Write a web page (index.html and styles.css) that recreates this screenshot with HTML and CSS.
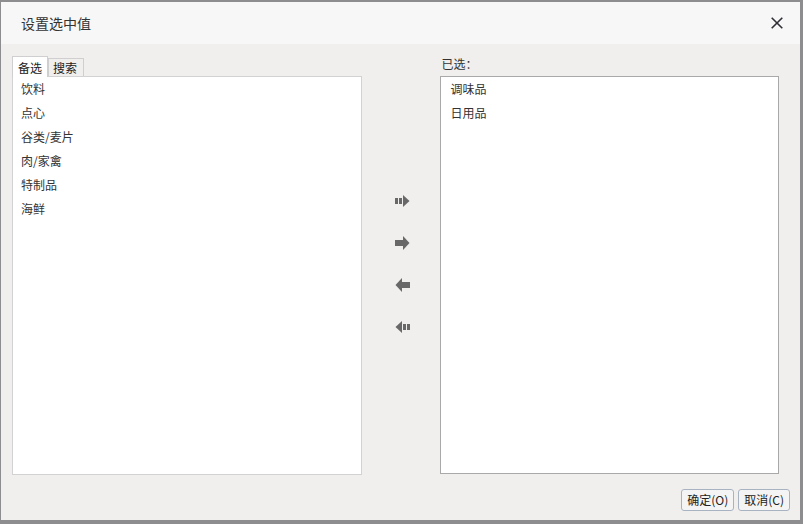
FILE: index.html
```html
<!DOCTYPE html>
<html lang="zh-CN">
<head>
<meta charset="utf-8">
<title>设置选中值</title>
<link rel="stylesheet" href="styles.css">
</head>
<body>
<div class="dialog">
  <div class="header">
    <span class="title">设置选中值</span>
    <span class="close" aria-label="关闭">
      <svg width="12" height="12" viewBox="0 0 12 12"><path d="M0.7 0.7 L11.3 11.3 M11.3 0.7 L0.7 11.3" stroke="#2f2f36" stroke-width="1.6" fill="none"/></svg>
    </span>
  </div>
  <div class="content">
    <div class="panel left">
      <div class="tabs">
        <div class="tab active">备选</div>
        <div class="tab">搜索</div>
      </div>
      <ul class="list list-left">
        <li>饮料</li>
        <li>点心</li>
        <li>谷类/麦片</li>
        <li>肉/家禽</li>
        <li>特制品</li>
        <li>海鲜</li>
      </ul>
    </div>
    <div class="mover">
      <span class="mbtn" title="全部右移">
        <svg width="15" height="13" viewBox="0 0 15 13"><rect x="0" y="3" width="3" height="6" fill="#686868"/><rect x="4" y="3" width="3" height="6" fill="#686868"/><polygon points="8,0 14.5,6 8,12" fill="#686868"/></svg>
      </span>
      <span class="mbtn" title="右移">
        <svg width="15" height="15" viewBox="0 0 15 15"><rect x="0" y="4" width="8" height="6" fill="#686868"/><polygon points="8,0 14.5,7 8,14" fill="#686868"/></svg>
      </span>
      <span class="mbtn" title="左移">
        <svg width="15" height="15" viewBox="0 0 15 15"><polygon points="7,0 0.5,7 7,14" fill="#686868"/><rect x="7" y="4" width="8" height="6" fill="#686868"/></svg>
      </span>
      <span class="mbtn" title="全部左移">
        <svg width="15" height="13" viewBox="0 0 15 13"><polygon points="7,0 0.5,6 7,12" fill="#686868"/><rect x="8" y="3" width="3" height="6" fill="#686868"/><rect x="12" y="3" width="3" height="6" fill="#686868"/></svg>
      </span>
    </div>
    <div class="panel right">
      <div class="label">已选：</div>
      <ul class="list list-right">
        <li>调味品</li>
        <li>日用品</li>
      </ul>
    </div>
  </div>
  <div class="footer">
    <button class="btn">确定(O)</button>
    <button class="btn">取消(C)</button>
  </div>
</div>
</body>
</html>
```
FILE: styles.css
```css
html, body {
  margin: 0;
  padding: 0;
}
body {
  background: #8d8d8f;
  width: 803px;
  height: 524px;
  overflow: hidden;
  font-family: "Noto Sans CJK SC", "Microsoft YaHei", "Liberation Sans", sans-serif;
  color: #333;
}
.dialog {
  margin: 2px 0 0 1px;
  width: 799px;
  height: 518px;
  background: #f0efee;
  display: flex;
  flex-direction: column;
  box-sizing: border-box;
}
.header {
  height: 42px;
  background: #f7f7f7;
  display: flex;
  align-items: center;
  justify-content: space-between;
  padding: 0 17px 0 20px;
  flex: none;
}
.title {
  font-size: 14px;
  color: #333;
  line-height: 20px;
}
.close {
  display: flex;
  width: 12px;
  height: 12px;
}
.content {
  display: flex;
  padding: 12px 21px 0 11px;
  height: 419px;
  flex: none;
}
.panel {
  display: flex;
  flex-direction: column;
}
.panel.left {
  width: 350px;
}
.panel.right {
  width: 339px;
}
.tabs {
  display: flex;
  align-items: flex-end;
  height: 20px;
  flex: none;
  position: relative;
  z-index: 1;
}
.tab {
  box-sizing: border-box;
  width: 36px;
  height: 18px;
  border: 1px solid #cfcfcf;
  border-bottom: none;
  background: #f0efee;
  font-size: 12px;
  line-height: 17px;
  padding-left: 4px;
  color: #222;
}
.tab.active {
  height: 21px;
  margin-bottom: -1px;
  background: #fff;
  line-height: 22px;
  padding-left: 5px;
}
.list {
  list-style: none;
  margin: 0;
  padding: 0;
  background: #fff;
  border: 1px solid #d2d2d2;
  flex: 1;
  box-sizing: border-box;
}
.list-right {
  border-color: #a9a9a9;
  flex: none;
  height: 398px;
}
.list li {
  font-size: 12px;
  line-height: 24px;
  height: 24px;
  color: #333;
}
.list-left li {
  padding-left: 8px;
}
.list-right li {
  padding-left: 9px;
}
.label {
  height: 20px;
  font-size: 12px;
  line-height: 16px;
  padding-left: 1px;
  color: #333;
  flex: none;
}
.mover {
  width: 79px;
  display: flex;
  flex-direction: column;
  align-items: center;
  justify-content: center;
  gap: 26px;
  padding-left: 2px;
  box-sizing: border-box;
  padding-bottom: 2px;
}
.mbtn {
  width: 16px;
  height: 16px;
  display: flex;
  align-items: center;
  justify-content: center;
}
.footer {
  display: flex;
  justify-content: flex-end;
  gap: 4px;
  padding: 14px 10px 0 0;
}
.btn {
  font-family: "Noto Sans CJK SC", "Microsoft YaHei", "Liberation Sans", sans-serif;
  font-size: 12px;
  height: 22px;
  line-height: 18px;
  padding: 0 5px;
  border: 1px solid #a8b3c2;
  border-radius: 3px;
  background: #f4f4f4;
  color: #222;
  margin: 0;
}
```
